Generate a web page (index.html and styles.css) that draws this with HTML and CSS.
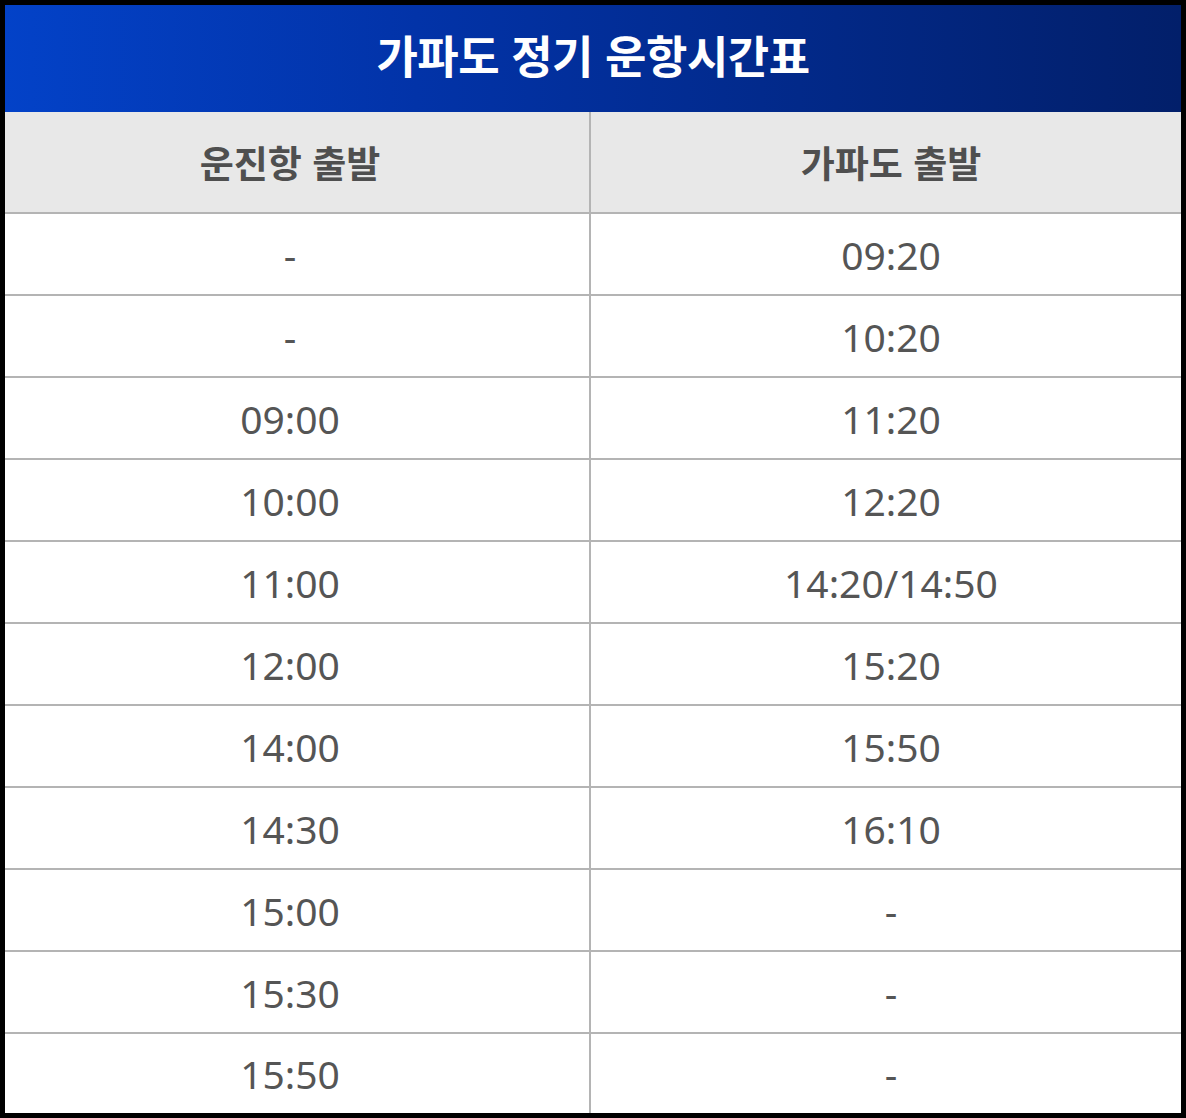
FILE: index.html
```html
<!DOCTYPE html>
<html lang="ko">
<head>
<meta charset="utf-8">
<title>가파도 정기 운항시간표</title>
<link rel="stylesheet" href="styles.css">
</head>
<body>
<div class="frame">
  <div class="title">가파도 정기 운항시간표</div>
  <div class="grid">
    <div class="cell head left">운진항 출발</div>
    <div class="cell head right">가파도 출발</div>

    <div class="cell left">-</div><div class="cell right">09:20</div>
    <div class="cell left">-</div><div class="cell right">10:20</div>
    <div class="cell left">09:00</div><div class="cell right">11:20</div>
    <div class="cell left">10:00</div><div class="cell right">12:20</div>
    <div class="cell left">11:00</div><div class="cell right">14:20/14:50</div>
    <div class="cell left">12:00</div><div class="cell right">15:20</div>
    <div class="cell left">14:00</div><div class="cell right">15:50</div>
    <div class="cell left">14:30</div><div class="cell right">16:10</div>
    <div class="cell left">15:00</div><div class="cell right">-</div>
    <div class="cell left">15:30</div><div class="cell right">-</div>
    <div class="cell left last">15:50</div><div class="cell right last">-</div>
  </div>
</div>
</body>
</html>
```
FILE: styles.css
```css
html, body {
  margin: 0;
  padding: 0;
  background: #000;
}
.frame {
  box-sizing: border-box;
  width: 1186px;
  height: 1118px;
  border: 5px solid #000;
  background: #fff;
  overflow: hidden;
  font-family: "Noto Sans CJK KR", "Noto Sans", sans-serif;
}
.title {
  height: 107px;
  padding-bottom: 8px;
  box-sizing: border-box;
  display: flex;
  align-items: center;
  justify-content: center;
  background: linear-gradient(90deg, #0342c8 0%, #0233a8 35%, #021f6a 100%);
  color: #fff;
  font-size: 45px;
  font-weight: 700;
  letter-spacing: -0.5px;
}
.grid {
  display: grid;
  grid-template-columns: 586px 590px;
}
.cell {
  height: 80px;
  display: flex;
  align-items: center;
  justify-content: center;
  border-bottom: 2px solid #b4b4b4;
  color: #555;
  font-family: "Noto Sans", "Noto Sans CJK KR", sans-serif;
  font-size: 39px;
  font-weight: 400;
  box-sizing: content-box;
}
.cell.left {
  border-right: 2px solid #b4b4b4;
  padding-right: 14px;
  width: 570px;
}
.cell.right {
  padding-left: 10px;
}
.cell.head {
  height: 100px;
  background: #e8e8e8;
  font-family: "Noto Sans CJK KR", "Noto Sans", sans-serif;
  font-size: 37px;
  font-weight: 700;
  color: #4f4f4f;
}
.cell.last {
  border-bottom: none;
  height: 79px;
}
```
